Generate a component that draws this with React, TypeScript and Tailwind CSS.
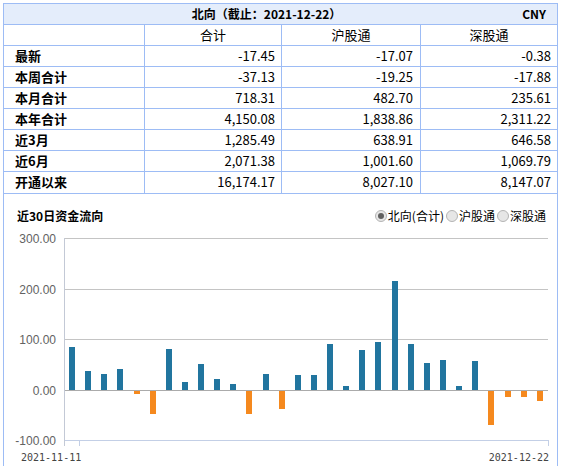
import React from "react";

const rows: string[][] = [
  ["最新", "-17.45", "-17.07", "-0.38"],
  ["本周合计", "-37.13", "-19.25", "-17.88"],
  ["本月合计", "718.31", "482.70", "235.61"],
  ["本年合计", "4,150.08", "1,838.86", "2,311.22"],
  ["近3月", "1,285.49", "638.91", "646.58"],
  ["近6月", "2,071.38", "1,001.60", "1,069.79"],
  ["开通以来", "16,174.17", "8,027.10", "8,147.07"],
];

const vals = [86, 37, 32, 42, -5, -45, 82, 15, 52, 22, 11, -45, 32, -35, 30, 30, 92, 7, 80, 96, 215, 92, 54, 60, 7, 58, -67, -11, -11, -19];

const font = { fontFamily: '"Noto Sans CJK SC", "Noto Sans", sans-serif' };

function Radio({ checked, label }: { checked?: boolean; label: string }) {
  return (
    <div className="flex items-center">
      <span className="relative w-[12px] h-[12px] rounded-full border border-[#b4b4b4] bg-[#e6e6e6] flex items-center justify-center">
        {checked && <span className="w-[6px] h-[6px] rounded-full bg-[#606060]" />}
      </span>
      <span className="ml-[1px] text-[12px] leading-[16px] text-black">{label}</span>
    </div>
  );
}

function Chart() {
  const y0 = 389;
  const k = 0.505;
  const grid = [
    { v: "300.00", y: 237.5 },
    { v: "200.00", y: 288.5 },
    { v: "100.00", y: 338.5 },
  ];
  return (
    <svg width={553} height={238} viewBox="4 228 553 238" className="block">
      {grid.map((g) => (
        <line key={g.v} x1={64} x2={548} y1={g.y} y2={g.y} stroke="#c4c4c4" strokeWidth={1} />
      ))}
      <line x1={64} x2={548} y1={389.5} y2={389.5} stroke="#ababab" strokeWidth={1} />
      <line x1={64} x2={548} y1={439.5} y2={439.5} stroke="#c3cfe6" strokeWidth={1} />
      <line x1={64.5} x2={64.5} y1={237} y2={445} stroke="#c3c9d6" strokeWidth={1} />
      <line x1={79.5} x2={79.5} y1={439} y2={445} stroke="#c3cfe6" strokeWidth={1} />
      <line x1={548.5} x2={548.5} y1={439} y2={445} stroke="#c3cfe6" strokeWidth={1} />
      {vals.map((v, i) => {
        const x = Math.round(64 + 16.13 * i + 5);
        const h = Math.max(2, Math.round(Math.abs(v) * k));
        if (v >= 0) {
          return <rect key={i} x={x} y={y0 - h} width={6} height={h} fill="#21759f" />;
        }
        return <rect key={i} x={x} y={y0 + 1} width={6} height={h} fill="#f5891e" />;
      })}
      {[
        { t: "300.00", y: 238 },
        { t: "200.00", y: 288.5 },
        { t: "100.00", y: 339 },
        { t: "0.00", y: 389.5 },
        { t: "-100.00", y: 440 },
      ].map((l) => (
        <text
          key={l.t}
          x={56}
          y={l.y + 4}
          textAnchor="end"
          fontSize={12}
          fill="#626262"
          fontFamily='"Liberation Sans", Arial, sans-serif'
        >
          {l.t}
        </text>
      ))}
      <text x={21} y={460} fontSize={10} fill="#444" fontFamily='"DejaVu Sans Mono", monospace'>
        2021-11-11
      </text>
      <text x={549} y={460} textAnchor="end" fontSize={10} fill="#444" fontFamily='"DejaVu Sans Mono", monospace'>
        2021-12-22
      </text>
    </svg>
  );
}

export default function App() {
  return (
    <div className="w-[563px] h-[466px] overflow-hidden bg-white text-black" style={font}>
      <div className="ml-[3px] mt-[3px] w-[555px]">
        <div className="border border-[#9dbcf5]">
          <div className="flex h-[21px] bg-[#e4edfb] border-b border-[#9dbcf5] text-[12px] leading-[20px] font-bold">
            <div className="flex-1 text-center pl-[7px]">北向（截止：2021-12-22）</div>
            <div className="pr-[11px]">CNY</div>
          </div>
          <div className="grid grid-cols-[141px_137px_139px_136px] text-[13px] leading-[20px]">
            <div className="h-[21px] border-b border-r border-[#9dbcf5]" />
            <div className="h-[21px] border-b border-r border-[#9dbcf5] text-center">合计</div>
            <div className="h-[21px] border-b border-r border-[#9dbcf5] text-center">沪股通</div>
            <div className="h-[21px] border-b border-[#9dbcf5] text-center">深股通</div>
            {rows.map((r, ri) => (
              <React.Fragment key={ri}>
                <div className={`h-[21px] border-r border-[#9dbcf5] pl-[11px] font-bold ${ri < rows.length - 1 ? "border-b" : ""}`}>
                  {r[0]}
                </div>
                <div className={`h-[21px] border-r border-[#9dbcf5] pr-[6px] text-right ${ri < rows.length - 1 ? "border-b" : ""}`}>
                  {r[1]}
                </div>
                <div className={`h-[21px] border-r border-[#9dbcf5] pr-[7px] text-right ${ri < rows.length - 1 ? "border-b" : ""}`}>
                  {r[2]}
                </div>
                <div className={`h-[21px] border-[#9dbcf5] pr-[6px] text-right ${ri < rows.length - 1 ? "border-b" : ""}`}>
                  {r[3]}
                </div>
              </React.Fragment>
            ))}
          </div>
        </div>
        <div className="border-l border-r border-[#9dbcf5] h-[300px]">
          <div className="flex items-end justify-between h-[35px] pb-[5px] pl-[13px] pr-[11px]">
            <div className="text-[12px] leading-[16px] font-bold">近30日资金流向</div>
            <div className="flex items-center gap-[2px]">
              <Radio checked label="北向(合计)" />
              <Radio label="沪股通" />
              <Radio label="深股通" />
            </div>
          </div>
          <Chart />
        </div>
      </div>
    </div>
  );
}
